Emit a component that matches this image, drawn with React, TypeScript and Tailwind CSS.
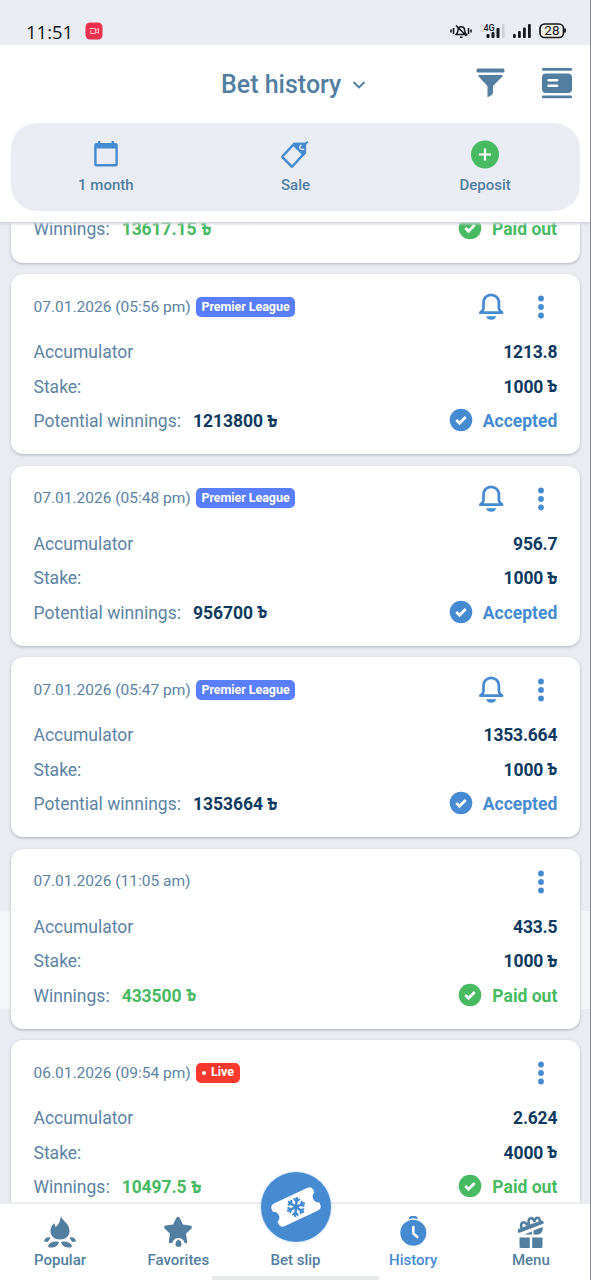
import { FaStar, FaSnowflake } from "react-icons/fa";

type Bet = {
  date: string;
  tag?: "league" | "live";
  coef: string;
  stake: string;
  win: string;
  status: "accepted" | "paid";
};

const bets: Bet[] = [
  { date: "07.01.2026 (05:56 pm)", tag: "league", coef: "1213.8", stake: "1000", win: "1213800", status: "accepted" },
  { date: "07.01.2026 (05:48 pm)", tag: "league", coef: "956.7", stake: "1000", win: "956700", status: "accepted" },
  { date: "07.01.2026 (05:47 pm)", tag: "league", coef: "1353.664", stake: "1000", win: "1353664", status: "accepted" },
  { date: "07.01.2026 (11:05 am)", coef: "433.5", stake: "1000", win: "433500", status: "paid" },
  { date: "06.01.2026 (09:54 pm)", tag: "live", coef: "2.624", stake: "4000", win: "10497.5", status: "paid" },
];

function Taka() {
  return (
    <span className="relative ml-[4px] inline-block h-5 w-[10px] align-middle">
      <span className="absolute left-0 top-[-3px] origin-left scale-x-[0.68] text-[22px] leading-5">ъ</span>
      <span className="absolute left-[1px] top-[6.500px] h-[1.500px] w-[9px] bg-current" />
    </span>
  );
}

function StatusBar() {
  return (
    <div className="flex h-[45px] items-center bg-[#e9edf2] pl-[26px] pr-[25px] pt-[18px] text-[#101418]">
      <span className="w-[48px] whitespace-nowrap font-['Open_Sans'] text-[18.500px] leading-6">11:51</span>
      <svg className="-mt-[2px] ml-[11px]" width="18" height="18" viewBox="0 0 18 18">
        <rect x="0.5" y="0.5" width="17" height="17" rx="4.5" fill="#ed2f50" />
        <path d="M4.500 6.500h6v5H5.500V9.500M5 9h1.500M10.500 8.500l3-1.800v4.500l-3-1.400" fill="none" stroke="#ffc0c8" strokeWidth="1" />
      </svg>
      <svg className="ml-auto" width="116" height="20" viewBox="0 0 116 20">
        <g fill="none" stroke="#17191c" strokeWidth="1.3">
          <path d="M1 7.500v3M3.500 6v6M21 7.500v3M18.500 6v6" strokeWidth="1.600" />
          <path d="M6 12.500h10.500c-1.500-1.500-2-2.500-2-4.500 0-4.500-6.500-4.500-6.500 0 0 2-.5 3-2 4.500zM6 3.500l10.500 10.500M10 15.200h2.500" strokeWidth="1.500" />
        </g>
        <path d="M30.500 5l2-2 2 2M30.500 8l2 2 2-2" fill="none" stroke="#bfc3c8" />
        <text x="33.500" y="8.500" fontFamily="Roboto" fontSize="9" fontWeight="500" fill="#17191c">4G</text>
        <g fill="#17191c">
          <rect x="36.500" y="12" width="3" height="4" rx="1" /><rect x="41.500" y="10" width="3" height="6" rx="1" />
          <rect x="46.500" y="6" width="3" height="10" rx="1" /><rect x="52" y="2" width="2.500" height="14" rx="1" fill="#cdd0d4" />
          <rect x="63" y="12" width="2.800" height="4" rx="1" /><rect x="68" y="9" width="2.800" height="7" rx="1" />
          <rect x="73" y="5.500" width="2.800" height="10.500" rx="1" /><rect x="78" y="2" width="2.800" height="14" rx="1" />
        </g>
        <rect x="90" y="2" width="23.500" height="13.500" rx="4.500" fill="#f1efe7" stroke="#17191c" strokeWidth="1.700" />
        <path d="M115 6.500v4" stroke="#17191c" strokeWidth="1.800" />
        <text x="94.300" y="13.300" fontFamily="Roboto" fontSize="13.500" fill="#17191c">28</text>
      </svg>
    </div>
  );
}

function Header() {
  return (
    <header className="relative z-10 h-[177px] shrink-0 bg-white pt-[18px]">
      <div className="flex h-[42px] items-center pl-[221px] pr-[18px] text-[#527fa0]">
        <h1 className="w-[121px] whitespace-nowrap pt-px text-[25px] font-medium leading-8">Bet history</h1>
        <svg className="ml-[9px] mt-[2px]" width="16" height="10" viewBox="0 0 16 10">
          <path d="M2.500 2l5.500 5.500L13.500 2" fill="none" stroke="currentColor" strokeWidth="1.900" />
        </svg>
        <svg className="-mt-[2px] ml-auto" width="30" height="32" viewBox="0 0 30 32" fill="currentColor">
          <rect x="1.500" y="1.500" width="28" height="4" rx="1.500" />
          <path d="M4 8h23c.8 0 1 .8.400 1.500L18 19v6.500c0 2-2.500 3.500-5.500 4.700V19L3.600 9.500C3 8.800 3.200 8 4 8z" />
        </svg>
        <svg className="-mt-[2px] ml-[36px]" width="32" height="32" viewBox="0 0 32 32" fill="currentColor">
          <rect x="1" y="1" width="30" height="2.700" rx="1" />
          <path fillRule="evenodd" d="M5 6.500h22q4 0 4 4v11.500q0 4-4 4H5q-4 0-4-4V10.500q0-4 4-4zM7.500 12q-1.200 0-1.200 1.300t1.200 1.300h8.700q1.200 0 1.200-1.300T16.200 12zm0 5.500q-1.200 0-1.200 1.300t1.200 1.300h8.700q1.200 0 1.200-1.300t-1.200-1.300z" />
          <rect x="1" y="28.500" width="30" height="2.700" rx="1" />
        </svg>
      </div>
      <div className="mx-[11px] mt-[18px] grid h-[88px] grid-cols-3 rounded-[26px] bg-[#e9edf3] text-[15px] font-medium leading-5 text-[#527fa0]">
        <div className="flex flex-col items-center pt-[14.500px]">
          <svg width="28" height="34" viewBox="0 0 28 34">
            <path d="M2.200 7q0-2 2-2h1.800V3h2.400v2h11.200V3H22v2h1.800q2 0 2 2v19.500q0 2-2 2H4.200q-2 0-2-2zM4.600 10.500v15.600h18.800V10.500z" fill="#468bd1" fillRule="evenodd" />
          </svg>
          <span className="mt-[3px]">1 month</span>
        </div>
        <div className="flex flex-col items-center pt-[14.500px]">
          <svg width="30" height="34" viewBox="0 0 30 34">
            <path d="M2.800 18 14 6h10.500v9L12.800 28q-.8.800-1.600 0l-8.400-8.300q-.8-.8 0-1.700z" fill="none" stroke="#468bd1" strokeWidth="2.500" strokeLinejoin="round" />
            <path d="M14 4.800h10.500l3-1.800 1 1.200-2.300 2.300v8.700l-2.700 3L12.500 7.500z" fill="#468bd1" />
            <path d="M21.500 7q-3.500 2-.5 4.200 1.500.8 3-.4" fill="none" stroke="#dce8f5" strokeWidth="1.500" />
          </svg>
          <span className="mt-[3px]">Sale</span>
        </div>
        <div className="flex flex-col items-center pt-[14.500px]">
          <svg width="30" height="34" viewBox="0 0 30 34">
            <circle cx="15" cy="16.500" r="14" fill="#47ba62" />
            <path d="M15 10.500v12M9 16.500h12" stroke="white" strokeWidth="2.200" />
          </svg>
          <span className="mt-[3px]">Deposit</span>
        </div>
      </div>
    </header>
  );
}

function Bell() {
  return (
    <svg width="28" height="30" viewBox="0 0 28 30" className="mr-[31px]">
      <path d="M6.500 10.500a7.700 7.700 0 0 1 15.400 0v5.500c0 2 .8 3 3.200 4.700H3.300C5.700 19 6.500 18 6.500 16z" fill="none" stroke="#468bd1" strokeWidth="2.700" strokeLinejoin="round" />
      <path d="M9.200 24.300h10q-1 3.500-5 3.500t-5-3.500z" fill="#468bd1" />
    </svg>
  );
}

function ResultRow({ win, paid }: { win: string; paid: boolean }) {
  return (
    <div className="flex h-[34.500px] items-center">
      <span>{paid ? "Winnings:" : "Potential winnings:"}</span>
      <span className={`ml-[12px] whitespace-nowrap font-bold -tracking-[0.05px] ${paid ? "text-[#47ba62]" : "text-[#0f3a5f]"}`}>{win}<Taka /></span>
      <svg className="-mt-[2px] ml-auto" width="24" height="24" viewBox="0 0 24 24">
        <circle cx="12" cy="12" r="11.300" fill={paid ? "#47ba62" : "#468bd1"} />
        <path d="M7.300 12l3.200 3.200 6.200-6.200" fill="none" stroke="white" strokeWidth="2.800" />
      </svg>
      <span className={`ml-[10px] font-bold ${paid ? "text-[#47ba62]" : "text-[#468bd1]"}`}>{paid ? "Paid out" : "Accepted"}</span>
    </div>
  );
}

function Card({ bet }: { bet: Bet }) {
  const paid = bet.status === "paid";
  return (
    <article className="h-[180px] shrink-0 rounded-[12px] bg-white pl-[22.500px] pr-[22.700px] pt-4 text-[17.500px] text-[#5b84a3] shadow-[0_1px_3px_rgba(70,80,100,0.38)]">
      <div className="mb-[11px] flex h-[34px] items-center">
        <span className="w-[157px] whitespace-nowrap pt-px text-[15.500px]">{bet.date}</span>
        {bet.tag === "league" && (
          <span className="-mt-px ml-[5.500px] h-5 w-[99px] whitespace-nowrap rounded-[5px] bg-[#5b7dff] text-center text-[12.500px] font-bold leading-5 -tracking-[0.05px] text-white">Premier League</span>
        )}
        {bet.tag === "live" && (
          <span className="-mt-px ml-[5.500px] flex h-5 w-[44px] items-center justify-center gap-[5px] rounded-[5px] bg-[#fd382f] text-[12.500px] font-bold text-white">
            <span className="size-1 rounded-full bg-white" />Live
          </span>
        )}
        <div className="ml-auto flex items-center pr-[11.500px]">
          {!paid && <Bell />}
          <svg width="10" height="24" viewBox="0 0 10 24" fill="#468bd1">
            <circle cx="5" cy="3.500" r="2.900" /><circle cx="5" cy="12" r="2.900" /><circle cx="5" cy="20.500" r="2.900" />
          </svg>
        </div>
      </div>
      <div className="flex h-[34.500px] items-center justify-between">
        <span>Accumulator</span>
        <span className="font-bold -tracking-[0.2px] text-[#0f3a5f]">{bet.coef}</span>
      </div>
      <div className="flex h-[34.500px] items-center justify-between">
        <span>Stake:</span>
        <span className="whitespace-nowrap font-bold -tracking-[0.1px] text-[#0f3a5f]">{bet.stake}<Taka /></span>
      </div>
      <ResultRow win={bet.win} paid={paid} />
    </article>
  );
}

function Fire() {
  return (
    <svg width="32" height="32" viewBox="0 0 32 32" fill="currentColor">
      <path d="M17 0c1 5 8.500 7 8.500 15 0 5-4 8.500-9.500 8.500S6.500 20 6.500 15c0-4 2-5.500 3.500-8 1 1.500 1.200 2.500 1.500 4 4-3 4.500-7 5.500-11z" />
      <path d="M0 25.500q1-5 6.500-4-1 3-3 4.500zM32 25.500q-1-5-6.500-4 1 3 3 4.500zM4 30q2-5 9-4.500 2 .5 2 1-2 5.500-9 5-1.500-.5-2-1.500zM28 30q-2-5-9-4.500-2 .5-2 1 2 5.500 9 5 1.500-.5 2-1.500z" />
    </svg>
  );
}

function Gift() {
  return (
    <svg width="28" height="32" viewBox="0 0 28 32" fill="currentColor">
      <path d="M2.500 21.500h10.300V32H4q-1.500 0-1.500-1.500zM15.200 21.500h10.300v9q0 1.500-1.500 1.500h-8.800z" />
      <path d="M1 16q-1-2.500 1.500-3.500L24 4.500q2-.5 2.500 1.500l.3 1.500L2 17z" />
      <path d="M4.500 12c-1.500-6 3-8 6-2.500M12 9C10 1 16 0 17.500 6M17.500 6c0-6 6.500-5 5-.5" fill="none" stroke="currentColor" strokeWidth="2.600" />
      <path d="M7 18.500l8-3v3zM16.500 14.500l9-3.500q1 6-4 7.500h-5z" />
    </svg>
  );
}

function Nav() {
  return (
    <nav className="relative z-10 grid h-[78px] shrink-0 grid-cols-5 border-t-2 border-[#e9ecf2] bg-white text-[15px] font-medium leading-5 text-[#527fa0]">
      <div className="flex flex-col items-center pl-[2px] pt-[12px]"><Fire /><span className="mt-[2px]">Popular</span></div>
      <div className="flex flex-col items-center pl-[2px] pt-[11px]">
        <div className="relative h-[33px] w-[30px]">
          <FaStar size={30} />
          <svg className="absolute bottom-0 left-[8.500px]" width="13" height="10" viewBox="0 0 13 10">
            <path d="M0 10Q-.5 0 6.500 0T13 10z" fill="white" />
            <path d="M6.500 1.500q3 1.500 3 4.300 0 3.200-3 3.200t-3-3.200q0-2.800 3-4.300z" fill="currentColor" />
          </svg>
        </div>
        <span className="mt-[2px]">Favorites</span>
      </div>
      <div className="flex flex-col items-center">
        <div className="relative -mt-[32px] ml-px flex size-[70px] items-center justify-center rounded-full bg-[#468bd1] shadow-[0_0_3px_rgba(70,139,209,0.4)]">
          <svg width="56" height="50" viewBox="0 0 56 50">
            <path transform="rotate(-25 28 25)" d="M10 12.500h36q5 0 5 4.500v2.500a5.800 5.800 0 0 0 0 11V33q0 4.500-5 4.500H10q-5 0-5-4.500v-2.500a5.800 5.800 0 0 0 0-11V17q0-4.500 5-4.500z" fill="white" />
          </svg>
          <FaSnowflake size={20} color="#468bd1" className="absolute left-[25px] top-[25px] rotate-[5deg]" />
        </div>
        <span className="mt-[8px]">Bet slip</span>
      </div>
      <div className="flex flex-col items-center pr-px pt-[12px] text-[#468bd1]">
        <svg width="28" height="32" viewBox="0 0 28 32" fill="currentColor">
          <circle cx="14.300" cy="16.800" r="13" />
          <path d="M10.300 2.500q0-2.500 4-2.500t4 2.500q-4-1.500-8 0z" stroke="currentColor" />
          <path d="M14.300 11v6.500l4 3.500" fill="none" stroke="white" strokeWidth="2.600" strokeLinecap="round" />
        </svg>
        <span className="mt-[2px]">History</span>
      </div>
      <div className="flex flex-col items-center pr-[2px] pt-[12px]"><Gift /><span className="mt-[2px]">Menu</span></div>
      <div className="absolute bottom-0 left-[212px] h-[4px] w-[167px] bg-[#e8e9eb]" />
    </nav>
  );
}

export default function App() {
  return (
    <div className="relative flex h-[1280px] w-[591px] flex-col overflow-hidden font-[Roboto,sans-serif]">
      <StatusBar />
      <Header />
      <main className="flex h-[980px] flex-col gap-[11.500px] overflow-hidden bg-[linear-gradient(#e9edf2_689px,#f4f6fa_689px,#f4f6fa_787px,#e9edf2_787px)] px-[11px]">
        <article className="-mt-[9.900px] h-[50.500px] shrink-0 rounded-b-[12px] bg-white pl-[22.500px] pr-[23px] text-[17.500px] text-[#5b84a3] shadow-[0_1px_3px_rgba(70,80,100,0.38)]">
          <ResultRow win="13617.15" paid />
        </article>
        {bets.map((bet) => <Card key={bet.date} bet={bet} />)}
      </main>
      <Nav />
      <div className="absolute left-0 right-0 top-[222px] z-20 h-[4px] bg-linear-to-b from-[#cfd4dd] to-transparent" />
      <div className="absolute bottom-0 right-0 top-0 z-20 w-px bg-[#85898e]" />
    </div>
  );
}
